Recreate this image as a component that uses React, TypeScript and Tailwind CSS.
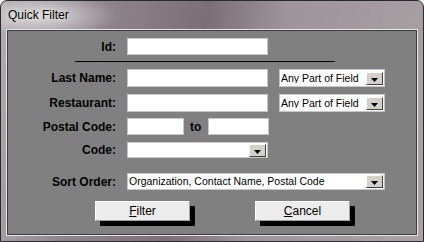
import React from "react";

const font = { fontFamily: '"Liberation Sans", Arial, sans-serif' };

function Box({ w, children }: { w: number; children?: React.ReactNode }) {
  return (
    <div
      className="h-full bg-white border border-[#c6c6c6] flex items-center pl-[2px] text-[10.5px] text-black leading-none whitespace-nowrap overflow-hidden"
      style={{ width: w }}
    >
      {children}
    </div>
  );
}

function Arrow() {
  return (
    <div className="w-[17px] h-[13px] bg-[#d4d0c8] border border-t-white border-l-white border-r-[#404040] border-b-[#404040] flex items-end justify-center pb-[2px] shrink-0">
      <svg width="7" height="4" viewBox="0 0 7 4">
        <path d="M0 0H7L3.5 4Z" fill="#000" />
      </svg>
    </div>
  );
}

function Combo({ w, text }: { w: number; text: string }) {
  return (
    <div
      className="h-full bg-white border border-[#c6c6c6] flex items-center pl-[1px] pr-[1px] text-[10.5px] text-black leading-none whitespace-nowrap"
      style={{ width: w }}
    >
      <span className="flex-1 overflow-hidden">{text}</span>
      <Arrow />
    </div>
  );
}

function Label({ children }: { children: React.ReactNode }) {
  return (
    <div className="w-[108px] shrink-0 text-right font-bold text-[12px] leading-none text-black pr-0">
      {children}
    </div>
  );
}

export default function App() {
  return (
    <div className="w-[424px] h-[242px] overflow-hidden bg-white" style={font}>
      <div className="w-full h-full border border-[#2a2a2e] rounded-t-[7px] flex flex-col bg-[radial-gradient(ellipse_75px_22px_at_42px_15px,rgba(255,255,255,0.6),transparent),linear-gradient(100deg,#b2adb0_0%,#8f868b_22%,#7a6f75_45%,#9d9599_62%,#a9a2a5_100%)]">
        <div className="h-[28px] shrink-0 flex items-center pl-[7px] text-[12px] text-black [text-shadow:0_0_6px_rgba(255,255,255,0.9)]">
          Quick Filter
        </div>
        <div className="flex-1 px-[5px] pb-[5px] min-h-0">
          <div className="h-full border border-[#ebe7e9]">
            <div className="h-full border border-[#3a3a3a] bg-[#808080] flex flex-col">
              {/* Id */}
              <div className="mt-[7px] h-[17px] flex items-center">
                <Label>Id:</Label>
                <div className="ml-[11px] h-full">
                  <Box w={141} />
                </div>
              </div>
              {/* separator */}
              <div className="mt-[6px] ml-[67px] w-[260px] h-px bg-black" />
              {/* Last Name */}
              <div className="mt-[7px] h-[18px] flex items-center">
                <Label>Last Name:</Label>
                <div className="ml-[11px] h-full flex">
                  <Box w={141} />
                  <div className="ml-[11px] h-full">
                    <Combo w={106} text="Any Part of Field" />
                  </div>
                </div>
              </div>
              {/* Restaurant */}
              <div className="mt-[7px] h-[18px] flex items-center">
                <Label>Restaurant:</Label>
                <div className="ml-[11px] h-full flex">
                  <Box w={141} />
                  <div className="ml-[11px] h-full">
                    <Combo w={106} text="Any Part of Field" />
                  </div>
                </div>
              </div>
              {/* Postal Code */}
              <div className="mt-[6px] h-[17px] flex items-center">
                <Label>Postal Code:</Label>
                <div className="ml-[11px] h-full flex items-center">
                  <Box w={57} />
                  <span className="ml-[6px] font-bold text-[12px] leading-none text-black">to</span>
                  <div className="ml-[7px] h-full">
                    <Box w={61} />
                  </div>
                </div>
              </div>
              {/* Code */}
              <div className="mt-[7px] h-[16px] flex items-center">
                <Label>Code:</Label>
                <div className="ml-[11px] h-full">
                  <Combo w={141} text="" />
                </div>
              </div>
              {/* Sort Order */}
              <div className="mt-[15px] h-[17px] flex items-center">
                <Label>Sort Order:</Label>
                <div className="ml-[11px] h-full">
                  <Combo w={258} text="Organization, Contact Name, Postal Code" />
                </div>
              </div>
              {/* Buttons */}
              <div className="mt-[11px] h-[20px] flex">
                <button className="ml-[87px] w-[95px] h-[20px] bg-[#ececec] border border-t-white border-l-white border-r-[#a0a0a0] border-b-[#a0a0a0] shadow-[5px_5px_0_#000] text-[12px] leading-none text-black flex items-center justify-center">
                  <span className="underline">F</span>ilter
                </button>
                <button className="ml-[65px] w-[95px] h-[20px] bg-[#ececec] border border-t-white border-l-white border-r-[#a0a0a0] border-b-[#a0a0a0] shadow-[5px_5px_0_#000] text-[12px] leading-none text-black flex items-center justify-center">
                  <span className="underline">C</span>ancel
                </button>
              </div>
            </div>
          </div>
        </div>
      </div>
    </div>
  );
}
